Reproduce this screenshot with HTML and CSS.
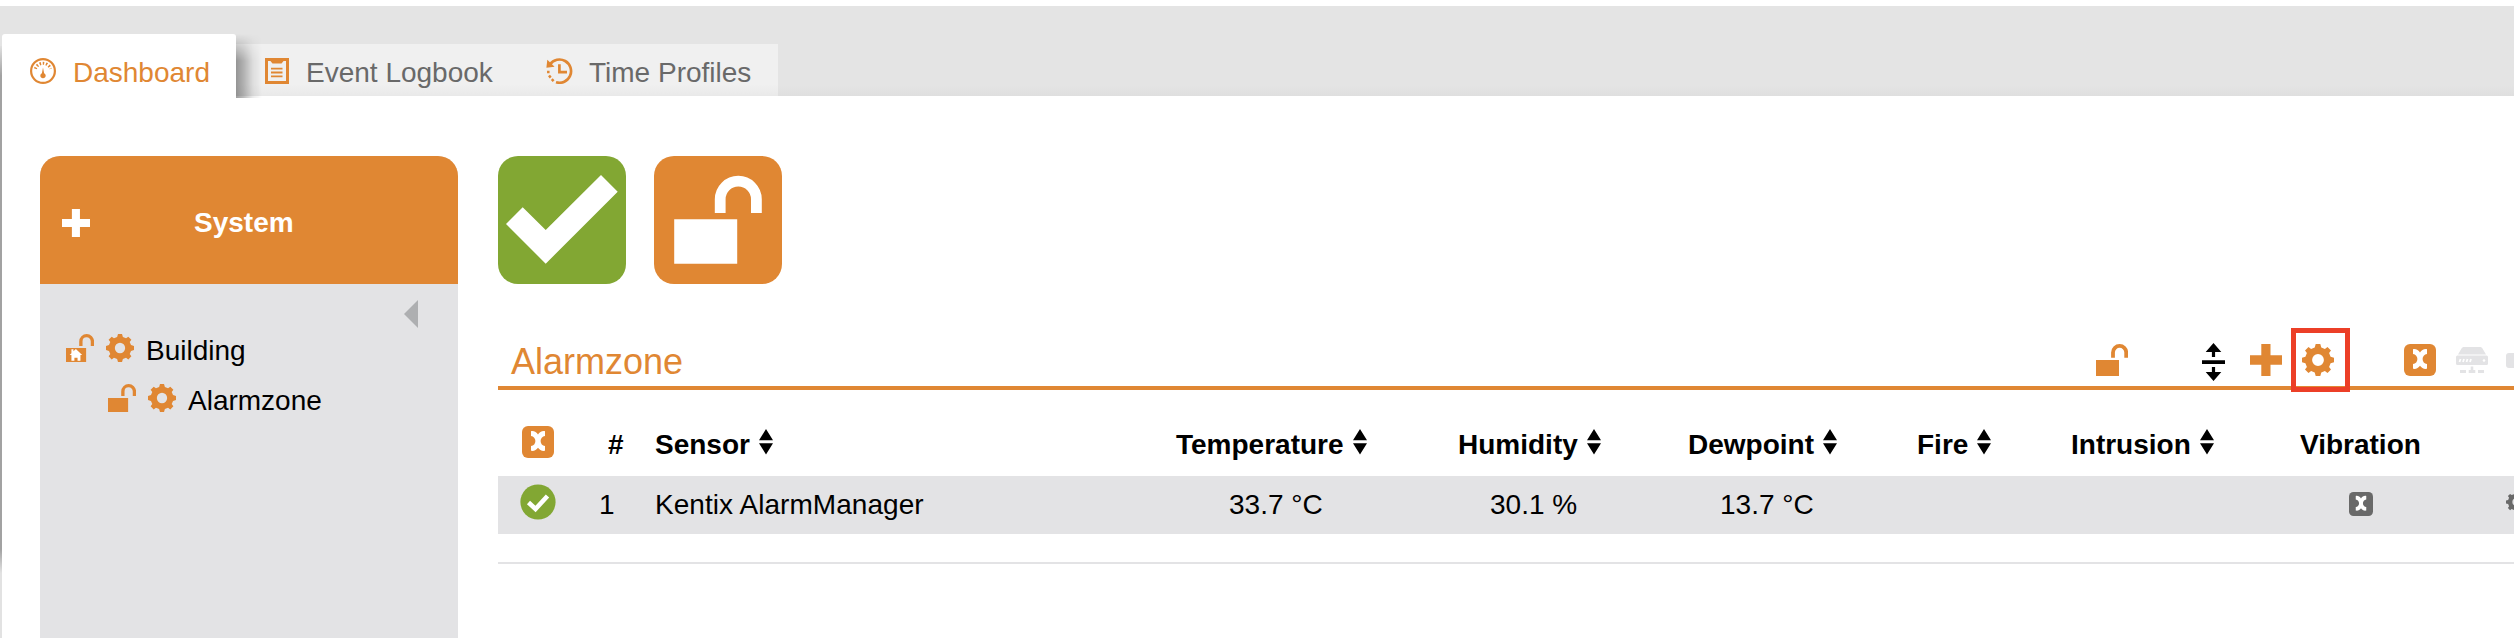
FILE: index.html
```html
<!DOCTYPE html>
<html lang="en">
<head>
<meta charset="utf-8">
<title>Dashboard</title>
<link rel="stylesheet" href="styles.css">
</head>
<body>
<svg class="defs" aria-hidden="true">
  <symbol id="unlock" viewBox="0 0 32 32"><path d="M0 16h23v16H0z" fill="currentColor"/><path d="M17 13.8V8.5a6.6 6.6 0 0 1 13.2 0v5.3" fill="none" stroke="currentColor" stroke-width="3.8"/></symbol>
  <symbol id="gear" viewBox="-16 -16 32 32"><path fill="currentColor" fill-rule="evenodd" d="M-2.300-16H2.300L3.300-12.600L6.900-11.100L9.500-13L13-9.500L11.100-6.900L12.600-3.300L16-2.300V2.300L12.600 3.300L11.100 6.900L13 9.500L9.500 13L6.900 11.100L3.300 12.600L2.300 16H-2.300L-3.300 12.600L-6.900 11.100L-9.500 13L-13 9.500L-11.100 6.900L-12.600 3.300L-16 2.300V-2.300L-12.600-3.300L-11.100-6.900L-13-9.500L-9.500-13L-6.900-11.100L-3.300-12.600ZM0-5.900a5.900 5.900 0 1 0 0 11.800a5.900 5.900 0 1 0 0-11.800Z"/></symbol>
  <symbol id="plus" viewBox="0 0 32 32"><path fill="currentColor" d="M11.3 0h9.2v11.3H32v9.4H20.500V32h-9.2V20.700H0v-9.400h11.300z"/></symbol>
  <symbol id="kx" viewBox="0 0 32 32"><rect width="32" height="32" rx="6" fill="currentColor"/><path fill="#fff" d="M9 5.200c3.200-.5 5.300.9 7 3.400c1.700-2.500 3.800-3.900 7-3.400v4.700c-2.700.2-4.400 2.500-4.400 5.100s1.700 4.900 4.400 5.100v4.700c-3.200.4-5.300-.6-7-3c-1.700 2.400-3.800 3.400-7 3v-4.700c2.700-.2 4.400-2.500 4.400-5.100S11.700 10.100 9 9.900z"/></symbol>
  <symbol id="sort" viewBox="0 0 14 26"><path d="M7 0l7 11.300H0zM0 14.200h14L7 25.500z"/></symbol>
</svg>

<header class="topbar">
  <nav class="tabs">
    <a class="tab tab-active">
      <svg class="tab-icon gauge" viewBox="0 0 26 26"><circle cx="13" cy="13" r="11.900" fill="none" stroke="currentColor" stroke-width="2.200"/><path d="M5.400 10.800A8 8 0 0 1 20.600 10.800" fill="none" stroke="currentColor" stroke-width="3" stroke-dasharray="1.500 1.700"/><path fill="currentColor" d="M13 9.500l1.100 5.700a2.700 2.700 0 1 1-2.200 0z"/></svg>
      <span>Dashboard</span>
    </a>
    <a class="tab tab-log">
      <svg class="tab-icon clip" viewBox="0 0 24 26"><path d="M1.500 1.500h21v23h-21z" fill="none" stroke="currentColor" stroke-width="3"/><path d="M5 1h14v1.500L16.500 5.500h-9L5 2.500z" fill="currentColor"/><path d="M6 10.700h11.500M6 14.500h11.500M6 18.300h11.500" stroke="currentColor" stroke-width="1.800"/></svg>
      <span>Event Logbook</span>
    </a>
    <a class="tab tab-time">
      <svg class="tab-icon clock" viewBox="0 0 28 26"><path d="M4 6.400A11.600 11.600 0 1 1 10 24.200" fill="none" stroke="currentColor" stroke-width="2.700"/><path d="M1.300 1.800L.4 9.800l8.200-1z" fill="currentColor"/><path d="M7.600 23.200L5.800 21.200M4.700 19.600L3 17.500M2.300 15.200V12.700" stroke="currentColor" stroke-width="2.500"/><path d="M13.400 6.300v7.900H21" fill="none" stroke="currentColor" stroke-width="2.700"/></svg>
      <span>Time Profiles</span>
    </a>
  </nav>
</header>

<div class="page">
  <aside class="sidebar">
    <div class="sidebar-head">
      <svg class="head-plus"><use href="#plus"/></svg>
      <span>System</span>
    </div>
    <svg class="collapse" viewBox="0 0 14 28"><path d="M14 0v28L0 14z" fill="#aeafb1"/></svg>
    <div class="node">
      <svg class="node-icon" viewBox="0 0 32 32"><use href="#unlock" width="32" height="32"/><path fill="#fff" d="M11.300 17.200l7.200 6.700h-2v6.600h-3.300v-3.300H9.600v3.300H6.200v-6.600h-2l2-2V17.300H8.500v2.400z"/></svg>
      <svg class="node-icon"><use href="#gear"/></svg>
      <span>Building</span>
    </div>
    <div class="node node-child">
      <svg class="node-icon"><use href="#unlock"/></svg>
      <svg class="node-icon"><use href="#gear"/></svg>
      <span>Alarmzone</span>
    </div>
  </aside>

  <main class="content">
    <div class="tiles">
      <svg class="tile tile-ok" viewBox="0 0 128 128"><path fill="#fff" d="M8 68L24.700 51.300L47.700 74L103 19L119.700 35.700L47.700 107.700z"/></svg>
      <svg class="tile tile-open" viewBox="0 0 128 128"><path fill="#fff" d="M20.200 63.200h63v44.500h-63z"/><path d="M66.200 57V43.300a18.100 18.100 0 0 1 36.200 0V57" fill="none" stroke="#fff" stroke-width="10.800"/></svg>
    </div>

    <div class="zone-head">
      <h1>Alarmzone</h1>
      <div class="tools">
        <svg class="tool tool-lock"><use href="#unlock"/></svg>
        <svg class="tool-updown" viewBox="0 0 23 38"><path d="M11.500 0l7.800 9h-6.200v5h-3.200V9H3.700zM0 17.300h23v3.600H0zM9.900 24h3.200v5h6.200l-7.800 9l-7.800-9h6.200z"/></svg>
        <svg class="tool tool-plus"><use href="#plus"/></svg>
        <div class="gear-box"><svg class="tool"><use href="#gear"/></svg></div>
        <svg class="tool tool-kx"><use href="#kx"/></svg>
        <svg class="tool-server" viewBox="0 0 32 26"><g fill="#e3e3e5"><path d="M8 0h16c1.300 0 2 .6 2.500 1.500L30 7.500H2L5.500 1.500C6 .6 6.700 0 8 0z"/><rect y="8.500" width="32" height="9.500" rx="1.500"/><path d="M14.700 19.500h2.600v3.500h2v3h-6.600v-3h2zM4 23h6v3H4zM22 23h6v3h-6z"/></g><path d="M3.500 15l1-3M7 15l1-3M10.500 15l1-3M14 15l1-3" stroke="#fff" stroke-width="1.800"/><circle cx="28" cy="13.500" r="1.300" fill="#fff"/></svg>
        <span class="tool-cut"></span>
      </div>
    </div>

    <div class="row row-head">
      <div><svg class="head-kx"><use href="#kx"/></svg></div>
      <div class="num">#</div>
      <div>Sensor<svg class="sort"><use href="#sort"/></svg></div>
      <div>Temperature<svg class="sort"><use href="#sort"/></svg></div>
      <div>Humidity<svg class="sort"><use href="#sort"/></svg></div>
      <div class="tight">Dewpoint<svg class="sort"><use href="#sort"/></svg></div>
      <div>Fire<svg class="sort"><use href="#sort"/></svg></div>
      <div class="tight">Intrusion<svg class="sort"><use href="#sort"/></svg></div>
      <div class="tight">Vibration</div>
      <div></div>
    </div>
    <div class="row row-data">
      <div><svg class="ok" viewBox="0 0 36 36"><circle cx="18" cy="18" r="17.600" fill="#82a733"/><path d="M8.500 18.500L15.500 25L27.500 12" fill="none" stroke="#fff" stroke-width="4.600"/></svg></div>
      <div class="tight">1</div>
      <div class="name">Kentix AlarmManager</div>
      <div class="temp">33.7 °C</div>
      <div class="hum">30.1 %</div>
      <div class="dew">13.7 °C</div>
      <div></div>
      <div></div>
      <div><svg class="vib"><use href="#kx"/></svg></div>
      <div><svg class="row-gear"><use href="#gear"/></svg></div>
    </div>
    <div class="divider"></div>
  </main>
</div>
</body>
</html>
```
FILE: styles.css
```css
* { box-sizing: border-box; }
body {
  margin: 0;
  height: 638px;
  overflow: hidden;
  background: #fff;
  color: #000;
  font: 28px/32px "Liberation Sans", Arial, sans-serif;
}
svg { display: block; flex: none; }
.defs { position: absolute; width: 0; height: 0; }

.topbar {
  height: 90px;
  margin-top: 6px;
  padding: 28px 0 0 2px;
  background: linear-gradient(#e4e4e4 88%, #dfdfdf);
}
.tabs { display: flex; align-items: flex-end; height: 62px; }
.tab {
  display: flex;
  align-items: center;
  height: 52px;
  padding-top: 3px;
  color: #696969;
  background: linear-gradient(#f0f0f0 78%, #e9e9e9);
  white-space: nowrap;
}
.tab span { padding-top: 2px; }
.tab-active {
  position: relative;
  width: 234px;
  height: 62px;
  padding: 13px 0 0 28px;
  border-radius: 3px 3px 0 0;
  background: #fff;
  color: #e08733;
}
.tab-active::after {
  content: "";
  position: absolute;
  left: 234px;
  top: 0;
  width: 26px;
  height: 64px;
  background: linear-gradient(90deg, rgba(0,0,0,.38), rgba(0,0,0,.26) 30%, rgba(0,0,0,.08) 65%, transparent);
  -webkit-mask-image: linear-gradient(transparent, #000 42%);
  mask-image: linear-gradient(transparent, #000 42%);
}
.tab-icon { height: 26px; color: #e08733; margin-top: -1px; }
.gauge { width: 26px; margin-right: 17px; }
.tab-log { width: 284px; padding-left: 29px; }
.clip { width: 24px; margin-right: 17px; }
.tab-time { width: 258px; padding-left: 26px; }
.clock { width: 28px; margin-right: 15px; }

.page { position: relative; display: flex; height: 542px; padding: 60px 0 0 40px; }
.page::before {
  content: "";
  position: absolute;
  left: 0;
  top: -50px;
  width: 2px;
  height: 592px;
  background: linear-gradient(#e0e0e0, #a2a2a2 5%, #a2a2a2 85%, #e2e2e2 89%);
}

.sidebar { width: 418px; background: #e3e3e5; border-radius: 20px 20px 0 0; }
.sidebar-head {
  display: flex;
  align-items: center;
  height: 128px;
  padding: 5px 0 0 22px;
  border-radius: 20px 20px 0 0;
  background: #e08733;
  color: #fff;
  font-weight: 700;
}
.head-plus { width: 28px; height: 28px; margin: 0 104px 0 0; }
.collapse { width: 14px; height: 28px; margin: 16px 0 0 364px; }
.node { display: flex; align-items: center; height: 50px; padding-left: 26px; margin-top: -5px; }
.node-child { padding-left: 68px; margin-top: 0; }
.node-icon { width: 28px; height: 28px; margin-right: 12px; color: #e08733; }
.node span { padding-top: 5px; }

.content { flex: 1; min-width: 0; margin-left: 40px; overflow: hidden; }
.tiles { display: flex; gap: 28px; height: 128px; }
.tile { width: 128px; height: 128px; border-radius: 20px; }
.tile-ok { background: #82a733; }
.tile-open { background: #e08733; }

.zone-head {
  display: flex;
  justify-content: space-between;
  height: 66px;
  margin-top: 40px;
  border-bottom: 4px solid #e08733;
  color: #e08733;
}
.zone-head h1 { margin: 18px 0 0 13px; font-size: 36px; line-height: 40px; font-weight: 400; }
.tools { display: flex; align-items: flex-start; }
.tool { width: 32px; height: 32px; }
.tool-lock { margin: 20px 74px 0 0; }
.tool-updown { width: 23px; height: 38px; margin: 19px 25px 0 0; fill: #000; }
.tool-plus { margin: 20px 9px 0 0; }
.gear-box { position: relative; z-index: 1; width: 59px; height: 64px; margin: 4px 54px 0 0; padding: 11px 0 0 6px; border: 5px solid #ec3f27; }
.tool-kx { margin: 20px 20px 0 0; }
.tool-server { width: 32px; height: 26px; margin: 23px 18px 0 0; }
.tool-cut { width: 8px; height: 15px; margin-top: 29px; border-radius: 3px 0 0 3px; background: #e3e3e5; }

.row {
  display: grid;
  grid-template-columns: 102px 55px 521px 282px 231px 228px 155px 229px 204px 1fr;
  align-items: center;
  white-space: nowrap;
}
.row > div { display: flex; align-items: center; }
.row > .tight { margin-left: -1px; }
.row-head { height: 86px; padding-top: 23px; font-weight: 700; }
.num { padding-left: 8px; }
.head-kx { width: 32px; height: 32px; margin: -5px 0 0 24px; color: #e08733; }
.sort { width: 14px; height: 26px; margin: -5px 0 0 9px; }
.row-data { height: 58px; background: #e3e3e5; }
.ok { width: 36px; height: 36px; margin: -6px 0 0 22px; }
.name { letter-spacing: .05px; }
.temp { padding-left: 53px; }
.hum { padding-left: 32px; }
.dew { padding-left: 31px; }
.vib { width: 24px; height: 24px; margin: -2px 0 0 48px; color: #696969; }
.row-gear { width: 20px; height: 20px; margin: -6px 0 0 1px; color: #696969; }
.divider { height: 2px; margin-top: 28px; background: #e3e3e5; }
```
